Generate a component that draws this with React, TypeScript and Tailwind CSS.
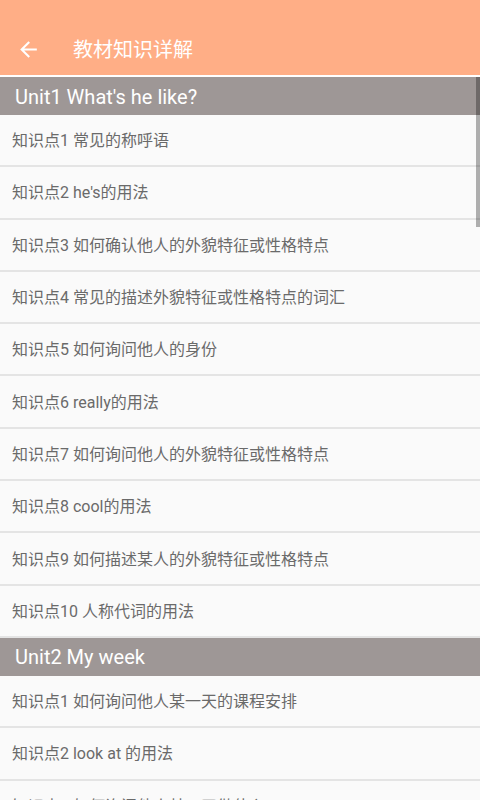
const units = [
  {
    title: "Unit1 What's he like?",
    items: [
      '知识点1 常见的称呼语',
      "知识点2 he's的用法",
      '知识点3 如何确认他人的外貌特征或性格特点',
      '知识点4 常见的描述外貌特征或性格特点的词汇',
      '知识点5 如何询问他人的身份',
      '知识点6 really的用法',
      '知识点7 如何询问他人的外貌特征或性格特点',
      '知识点8 cool的用法',
      '知识点9 如何描述某人的外貌特征或性格特点',
      '知识点10 人称代词的用法',
    ],
  },
  {
    title: 'Unit2 My week',
    items: [
      '知识点1 如何询问他人某一天的课程安排',
      '知识点2 look at 的用法',
      '知识点3 如何询问他人某一天做什么',
    ],
  },
];

export default function App() {
  return (
    <div
      className="relative h-[800px] w-[480px] overflow-hidden bg-[#fafafa]"
      style={{ fontFamily: "Roboto, 'Noto Sans CJK SC', sans-serif" }}
    >
      {/* Toolbar */}
      <div className="flex h-[75px] items-center bg-[#ffae86] pt-[24px]">
        <svg className="ml-[16px] h-[25px] w-[25px]" viewBox="0 0 24 24" fill="#fff">
          <path d="M20 11H7.83l5.59-5.59L12 4l-8 8 8 8 1.41-1.41L7.83 13H20v-2z" />
        </svg>
        <span className="ml-[32px] text-[20px] text-white">教材知识详解</span>
      </div>
      <div className="h-[2px] bg-white" />

      {units.map((u) => (
        <div key={u.title}>
          <div className="flex h-[38px] items-center bg-[#9e9796] pl-[15px] pt-[1px] text-[20px] text-white">
            {u.title}
          </div>
          {u.items.map((it, i) => (
            <div
              key={i}
              className="flex h-[52.3px] items-center border-b-2 border-[#e4e4e4] pl-[12px] pt-[2px] text-[16px] text-[#6a6a6a]"
            >
              {it}
            </div>
          ))}
        </div>
      ))}

      {/* Scrollbar thumb */}
      <div className="absolute right-0 top-[77px] h-[150px] w-[4px] bg-black/30" />
    </div>
  );
}
